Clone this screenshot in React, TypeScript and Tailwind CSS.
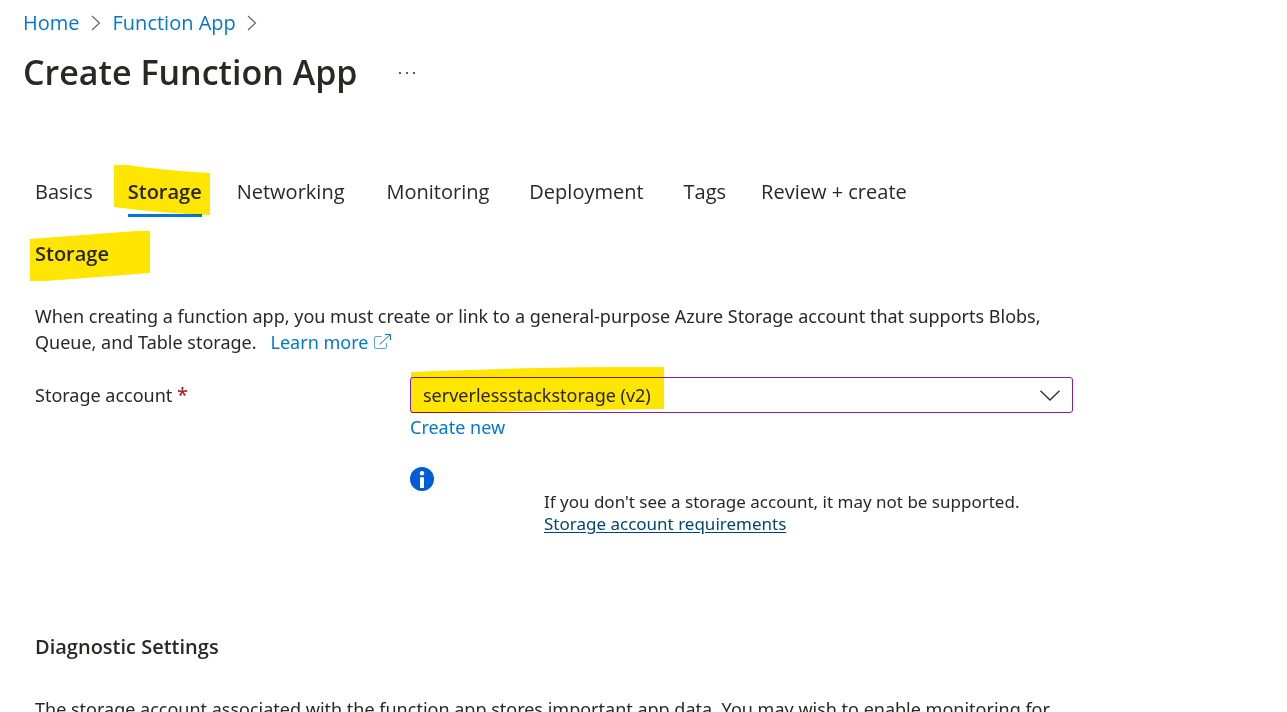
import React from "react";

const tabs = [
  { label: "Basics", spacing: "mr-[35px]" },
  { label: "Storage", spacing: "mr-[35px]", active: true },
  { label: "Networking", spacing: "mr-[42px]" },
  { label: "Monitoring", spacing: "mr-10" },
  { label: "Deployment", spacing: "mr-10" },
  { label: "Tags", spacing: "mr-[35px]" },
  { label: "Review + create", spacing: "" },
];

function Crumb({ label }: { label: string }) {
  return (
    <li className="flex items-center">
      <a href="#" className="text-[#0078d4] hover:underline">
        {label}
      </a>
      <svg viewBox="0 0 10 16" className="mr-3 ml-[11px] h-4 w-[10px]" fill="none" stroke="#605e5c" strokeWidth="1.1" aria-hidden="true">
        <path d="M1 1L8.500 8L1 15" />
      </svg>
    </li>
  );
}

function Marker({ className, box, points }: { className: string; box: string; points: string }) {
  return (
    <svg
      className={`pointer-events-none absolute mix-blend-multiply ${className}`}
      viewBox={box}
      preserveAspectRatio="none"
      aria-hidden="true"
    >
      <path d={points} fill="#ffe600" />
    </svg>
  );
}

export default function App() {
  return (
    <main className="h-screen overflow-hidden bg-white font-['Noto_Sans',sans-serif] text-[18px] leading-[26px] text-[#292827]">
      <header className="px-[23px] pt-[10px] font-['Open_Sans',sans-serif]">
        <nav aria-label="Breadcrumb">
          <ol className="flex text-[20px]">
            <Crumb label="Home" />
            <Crumb label="Function App" />
          </ol>
        </nav>
        <div className="mt-[11px] flex items-center gap-10">
          <h1 className="text-[34px] leading-[50px] font-semibold">Create Function App</h1>
          <button type="button" aria-label="More actions" className="py-2">
            <svg viewBox="0 0 18 4" className="h-1 w-[18px]" fill="#292827" aria-hidden="true">
              <circle cx="2" cy="3" r="1" />
              <circle cx="9" cy="3" r="1" />
              <circle cx="16" cy="3" r="1" />
            </svg>
          </button>
        </div>
      </header>

      <div className="max-w-[1073px] pt-[78px] pl-[35px]">
        <div role="tablist" className="flex font-['Open_Sans',sans-serif] text-[20px]">
          {tabs.map((tab) => (
            <button
              key={tab.label}
              type="button"
              role="tab"
              aria-selected={!!tab.active}
              className={`border-b-[3px] pt-1 pb-[9px] whitespace-nowrap ${tab.spacing} ${
                tab.active ? "relative border-[#0078d4] font-semibold" : "border-transparent"
              }`}
            >
              {tab.label}
              {tab.active && (
                <Marker
                  className="-top-[10px] -left-[14px] h-[50px] w-24"
                  box="0 0 96 50"
                  points="M0 0H14Q46 5 96 8V50Q44 48 0 42Z"
                />
              )}
            </button>
          ))}
        </div>

        <section>
          <h2 className="relative mt-6 w-fit font-['Open_Sans',sans-serif] text-[20px] font-semibold">
            Storage
            <Marker
              className="-top-[10px] -left-[5px] h-[50px] w-[120px]"
              box="0 0 120 50"
              points="M0 8L106 0H120V42L16 50H0Z"
            />
          </h2>
          <p className="mt-9">
            When creating a function app, you must create or link to a general-purpose Azure Storage account that
            supports Blobs, Queue, and Table storage.
            <a href="#" className="ml-[14px] text-[#0078d4]">
              Learn more
              <svg viewBox="0 0 17 16" className="mb-1 ml-[6px] inline h-4 w-[17px]" fill="none" stroke="#0078d4" aria-hidden="true">
                <path strokeOpacity=".65" d="M7.500 2.500H2Q.5 2.500 .5 4V13Q.5 14.500 2 14.500H11Q12.500 14.500 12.500 13V9" />
                <path d="M5.500 10.500L16 .8M11 .5H16.500V6" />
              </svg>
            </a>
          </p>

          <div className="mt-[22px] flex">
            <label htmlFor="storage-account" className="w-[375px] shrink-0 pt-[5px]">
              Storage account <span className="text-[20px] font-medium text-[#a4262c]">*</span>
            </label>
            <div className="grow">
              <div className="relative">
                <select
                  id="storage-account"
                  className="block h-9 w-full appearance-none rounded-[3px] border border-[#881fa3] bg-white px-3 leading-[26px] text-[#292827] outline-none"
                >
                  <option>serverlessstackstorage (v2)</option>
                </select>
                <svg
                  viewBox="0 0 20 11"
                  className="pointer-events-none absolute top-[13px] right-[13px] h-[11px] w-5"
                  fill="none"
                  stroke="#323130"
                  strokeWidth="1.4"
                  aria-hidden="true"
                >
                  <path d="M.5 .7L10 10L19.500 .7" />
                </svg>
                <Marker
                  className="-top-[10px] left-[1px] h-[46px] w-[253px]"
                  box="0 0 253 46"
                  points="M0 5Q126 0 205 0H253V42Q130 43 50 46H0Z"
                />
              </div>
              <a href="#" className="mt-[1px] block w-fit text-[#0078d4]">
                Create new
              </a>
              <div role="note" className="mt-[27px] flex items-start">
                <svg viewBox="0 0 24 24" className="size-6 shrink-0" aria-hidden="true">
                  <circle cx="12" cy="12" r="12" fill="#015cda" />
                  <circle cx="12" cy="6.300" r="2.200" fill="#fff" />
                  <path d="M10 10.300H14V21H10Z" fill="#fff" />
                </svg>
                <p className="mt-6 ml-[110px] text-[17px] leading-[22px]">
                  If you don't see a storage account, it may not be supported.
                  <br />
                  <a href="#" className="text-[#004578] underline underline-offset-2">
                    Storage account requirements
                  </a>
                </p>
              </div>
            </div>
          </div>
        </section>

        <section className="mt-[99px]">
          <h2 className="font-['Open_Sans',sans-serif] text-[20px] font-semibold">Diagnostic Settings</h2>
          <p className="mt-9">
            The storage account associated with the function app stores important app data. You may wish to enable
            monitoring for
          </p>
        </section>
      </div>
    </main>
  );
}
